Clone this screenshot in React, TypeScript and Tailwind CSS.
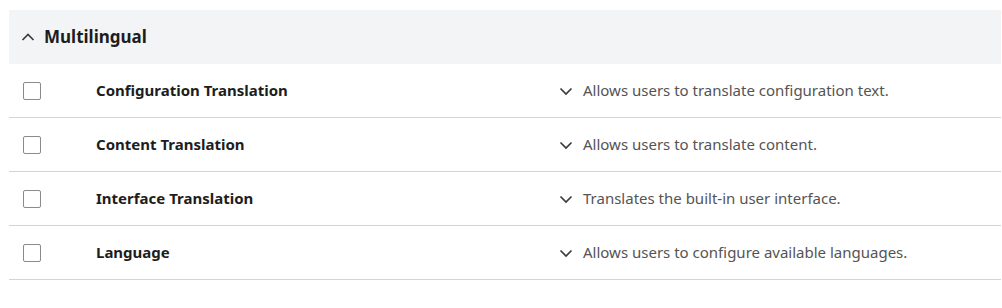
const MODULES = [
  { name: 'Configuration Translation', description: 'Allows users to translate configuration text.' },
  { name: 'Content Translation', description: 'Allows users to translate content.' },
  { name: 'Interface Translation', description: 'Translates the built-in user interface.' },
  { name: 'Language', description: 'Allows users to configure available languages.' },
]

function Chevron({ up = false }: { up?: boolean }) {
  return (
    <svg width="14" height="14" viewBox="0 0 14 14" className="shrink-0">
      <path
        d={up ? 'M1.5 10 L7 4.5 L12.5 10' : 'M1.5 4.5 L7 10 L12.5 4.5'}
        fill="none"
        stroke="#3b3b3b"
        strokeWidth="1.7"
      />
    </svg>
  )
}

export default function App() {
  return (
    <div className="min-h-screen bg-white pl-[9px] pt-[10px] font-['Noto_Sans',sans-serif] text-[#222]">
      <section className="w-[992px]">
        {/* 見出し */}
        <div className="flex h-[54px] items-center gap-[9px] bg-[#f3f4f6] pl-[12px]">
          <Chevron up />
          <h2 className="text-[17px] font-bold text-[#1d1d1d]">Multilingual</h2>
        </div>

        {/* モジュール一覧 */}
        {MODULES.map((m) => (
          <div key={m.name} className="flex h-[54px] items-center border-b border-[#d4d4d4]">
            <div className="ml-[14px] h-[18px] w-[18px] shrink-0 rounded-[2px] border border-[#8a8a8a] bg-white" />
            <div className="ml-[55px] w-[463px] shrink-0 text-[15px] font-bold text-[#1d1d1d]">{m.name}</div>
            <div className="flex items-center gap-[10px] text-[15px] text-[#545454]">
              <Chevron />
              <span>{m.description}</span>
            </div>
          </div>
        ))}
      </section>
    </div>
  )
}
